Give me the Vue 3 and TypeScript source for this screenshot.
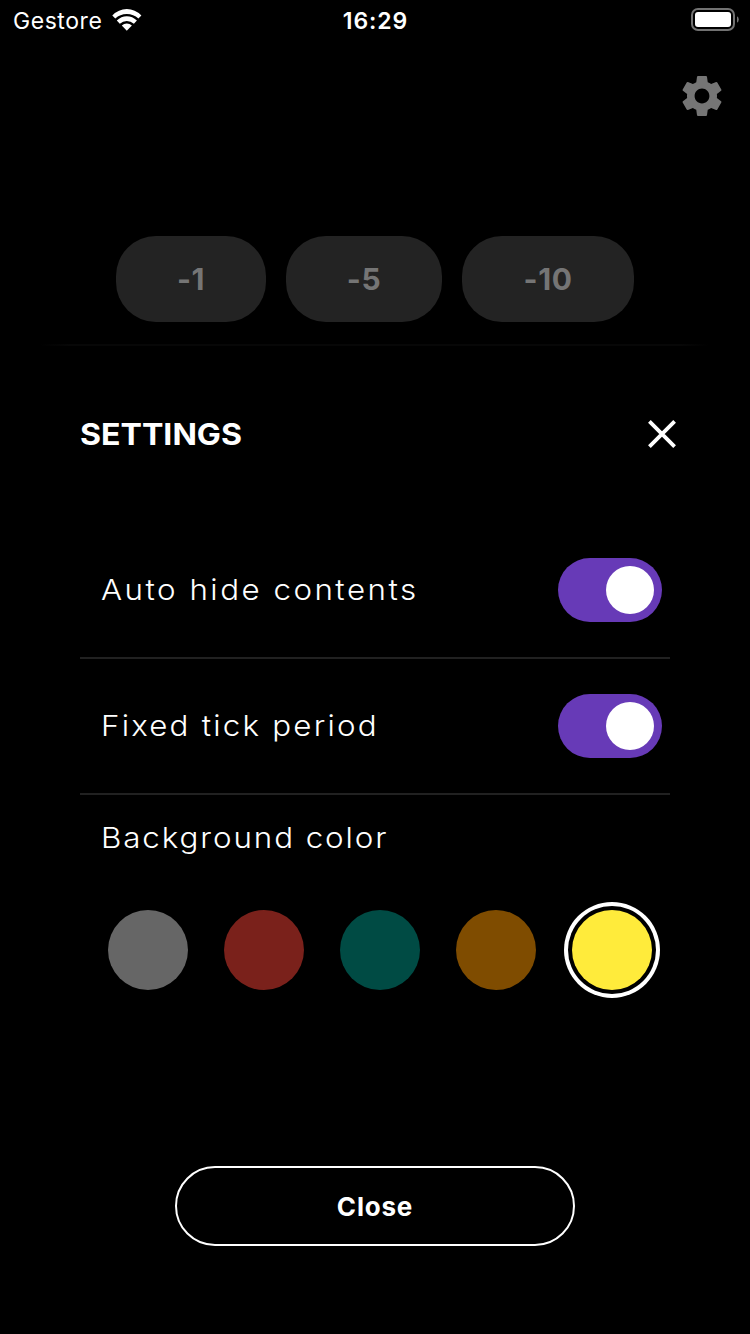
<script setup lang="ts">
import { ref } from 'vue'

interface Toggle {
  label: string
  cls: string
  on: boolean
}

const adjustments = [
  { label: '-1', cls: 'one' },
  { label: '-5', cls: 'five' },
  { label: '-10', cls: 'ten' },
]
const toggles = ref<Toggle[]>([
  { label: 'Auto hide contents', cls: 'auto', on: true },
  { label: 'Fixed tick period', cls: 'fixed', on: true },
])
const colors = ['gray', 'red', 'teal', 'orange', 'yellow']
const selected = ref('yellow')
</script>

<template>
  <main class="screen">
    <header class="status">
      <div class="carrier">
        <span class="carrier-name">Gestore</span>
        <svg class="wifi" width="30" height="22" viewBox="0 0 30 22">
          <path d="M0.3 6.5Q6.5 0 14.8 0T29.4 6.5L26.4 9.5Q21.6 4.9 14.8 4.9T3.3 9.5Z" />
          <path d="M4.8 11.6Q9.2 7.3 14.8 7.3T24.9 11.6L21.9 14.7Q18.8 11.9 14.8 11.9T7.8 14.7Z" />
          <path d="M9.8 16.6Q12 14.4 14.8 14.4T19.9 16.6L14.8 21.8Z" />
        </svg>
      </div>
      <span class="time">16:29</span>
      <svg class="battery" width="50" height="24" viewBox="0 0 50 24">
        <rect x="2" y="1" width="42" height="21" rx="6" fill="none" stroke="#727272" stroke-width="2" />
        <rect x="5" y="4" width="36" height="15" rx="3" fill="#fff" />
        <path d="M47 8.2Q48.8 9.2 48.8 11.5T47 14.8Z" fill="#727272" />
      </svg>
    </header>

    <div class="toolbar">
      <svg width="48" height="48" viewBox="0 0 24 24" fill="#757575">
        <path d="M19.43 12.98c.04-.32.07-.64.07-.98s-.03-.66-.07-.98l2.11-1.65c.19-.15.24-.42.12-.64l-2-3.46c-.12-.22-.39-.3-.61-.22l-2.49 1c-.52-.4-1.08-.73-1.69-.98l-.38-2.65C14.46 2.18 14.25 2 14 2h-4c-.25 0-.46.18-.49.42l-.38 2.65c-.61.25-1.17.59-1.69.98l-2.49-1c-.23-.09-.49 0-.61.22l-2 3.46c-.13.22-.07.49.12.64l2.11 1.65c-.04.32-.07.65-.07.98s.03.66.07.98l-2.11 1.65c-.19.15-.24.42-.12.64l2 3.46c.12.22.39.3.61.22l2.49-1c.52.4 1.08.73 1.69.98l.38 2.65c.03.24.24.42.49.42h4c.25 0 .46-.18.49-.42l.38-2.65c.61-.25 1.17-.59 1.69-.98l2.49 1c.23.09.49 0 .61-.22l2-3.46c.12-.22.07-.49-.12-.64l-2.11-1.65zM12 15.7c-2.04 0-3.7-1.66-3.7-3.7s1.66-3.7 3.7-3.7 3.7 1.66 3.7 3.7-1.66 3.7-3.7 3.7z" />
      </svg>
    </div>

    <div class="adjust">
      <button v-for="a in adjustments" :key="a.label" class="pill" :class="a.cls">{{ a.label }}</button>
    </div>

    <section class="sheet">
      <div class="edge"></div>
      <div class="head">
        <h1>SETTINGS</h1>
        <svg width="28" height="28" viewBox="0 0 28 28" fill="none" stroke="#fff" stroke-width="3.8">
          <path d="M1.4 1.4 26.6 26.6M26.6 1.4 1.4 26.6" />
        </svg>
      </div>

      <div v-for="t in toggles" :key="t.label" class="row">
        <span class="label" :class="t.cls">{{ t.label }}</span>
        <button class="switch" :class="{ on: t.on }" @click="t.on = !t.on"><span class="knob"></span></button>
      </div>

      <div class="heading"><span class="label background">Background color</span></div>
      <div class="swatches">
        <button
          v-for="c in colors"
          :key="c"
          class="swatch"
          :class="[c, { selected: c === selected }]"
          @click="selected = c"
        ></button>
      </div>

      <button class="close">Close</button>
    </section>
  </main>
</template>

<style>
body {
  background: #000;
}
</style>

<style scoped>
* {
  box-sizing: border-box;
}
.screen {
  width: 750px;
  height: 1334px;
  display: flex;
  flex-direction: column;
  overflow: hidden;
  background: #000;
  color: #fff;
  font-family: Inter, 'Liberation Sans', sans-serif;
}
button {
  padding: 0;
  border: 0;
  font-family: inherit;
  color: inherit;
  background: none;
}
svg {
  display: block;
}
.status {
  height: 40px;
  display: grid;
  grid-template-columns: 1fr auto 1fr;
  align-items: center;
  padding: 0 10px 0 13px;
}
.carrier {
  display: flex;
  align-items: center;
  gap: 10px;
}
.carrier-name {
  width: 89px;
  font-size: 23px;
  letter-spacing: 0.55px;
  line-height: 40px;
  white-space: nowrap;
  padding-top: 1px;
}
.wifi {
  fill: #fff;
  margin-bottom: 1px;
}
.time {
  font-size: 23px;
  font-weight: 600;
  letter-spacing: 0.9px;
  padding-top: 1px;
  margin-right: 2px;
}
.battery {
  justify-self: end;
  margin-bottom: 2px;
}
.toolbar {
  height: 80px;
  padding: 32px 24px 0 0;
  display: flex;
  justify-content: flex-end;
}
.adjust {
  margin-top: 116px;
  display: flex;
  justify-content: center;
  gap: 20px;
}
.pill {
  height: 86px;
  border-radius: 40px;
  background: #232323;
  color: #757575;
  font-size: 30px;
  font-weight: 700;
  letter-spacing: 0.6px;
}
.one {
  width: 150px;
}
.five {
  width: 156px;
}
.ten {
  width: 172px;
}
.sheet {
  margin-top: 22px;
  padding: 0 80px;
  display: flex;
  flex-direction: column;
}
.edge {
  height: 2px;
  margin: 0 -40px;
  background: linear-gradient(90deg, transparent, #070707 30px, #070707 calc(100% - 30px), transparent);
}
.head {
  height: 177px;
  padding-bottom: 1px;
  margin-right: -6px;
  display: flex;
  align-items: center;
  justify-content: space-between;
}
h1 {
  margin: 0;
  font-size: 30px;
  font-weight: 700;
  transform: scaleX(1.07);
  transform-origin: left;
}
.row {
  height: 136px;
  padding: 0 8px 0 22px;
  border-bottom: 2px solid #212121;
  display: flex;
  align-items: center;
  justify-content: space-between;
}
.label {
  font-size: 29px;
  font-weight: 350;
  white-space: nowrap;
  transform: scaleX(1.08);
  transform-origin: left;
}
.auto {
  letter-spacing: 2.3px;
  padding-bottom: 2px;
  margin-left: -1px;
}
.fixed {
  letter-spacing: 2.04px;
  padding-bottom: 2px;
  margin-left: -1px;
}
.background {
  letter-spacing: 1.77px;
  margin-left: -1px;
}
.switch {
  width: 104px;
  height: 64px;
  padding: 8px;
  border-radius: 32px;
  background: #444;
  display: flex;
}
.switch.on {
  background: #673ab7;
  justify-content: flex-end;
}
.knob {
  width: 48px;
  height: 48px;
  border-radius: 50%;
  background: #fff;
}
.heading {
  height: 87px;
  padding-left: 22px;
  padding-bottom: 2px;
  display: flex;
  align-items: center;
}
.swatches {
  margin: 28px 0 0 28px;
  display: flex;
  gap: 36px;
}
.swatch {
  width: 80px;
  height: 80px;
  flex: none;
  border-radius: 50%;
}
.gray {
  background: #666;
}
.red {
  background: #7a211b;
}
.teal {
  background: #004b44;
}
.orange {
  background: #7f4c00;
}
.yellow {
  background: #ffeb3b;
}
.selected {
  box-shadow: 0 0 0 4px #000, 0 0 0 8px #fff;
}
.close {
  align-self: center;
  width: 400px;
  height: 80px;
  margin-top: 176px;
  border: 2px solid #fff;
  border-radius: 40px;
  font-size: 26px;
  font-weight: 700;
  letter-spacing: 0.8px;
}
</style>
